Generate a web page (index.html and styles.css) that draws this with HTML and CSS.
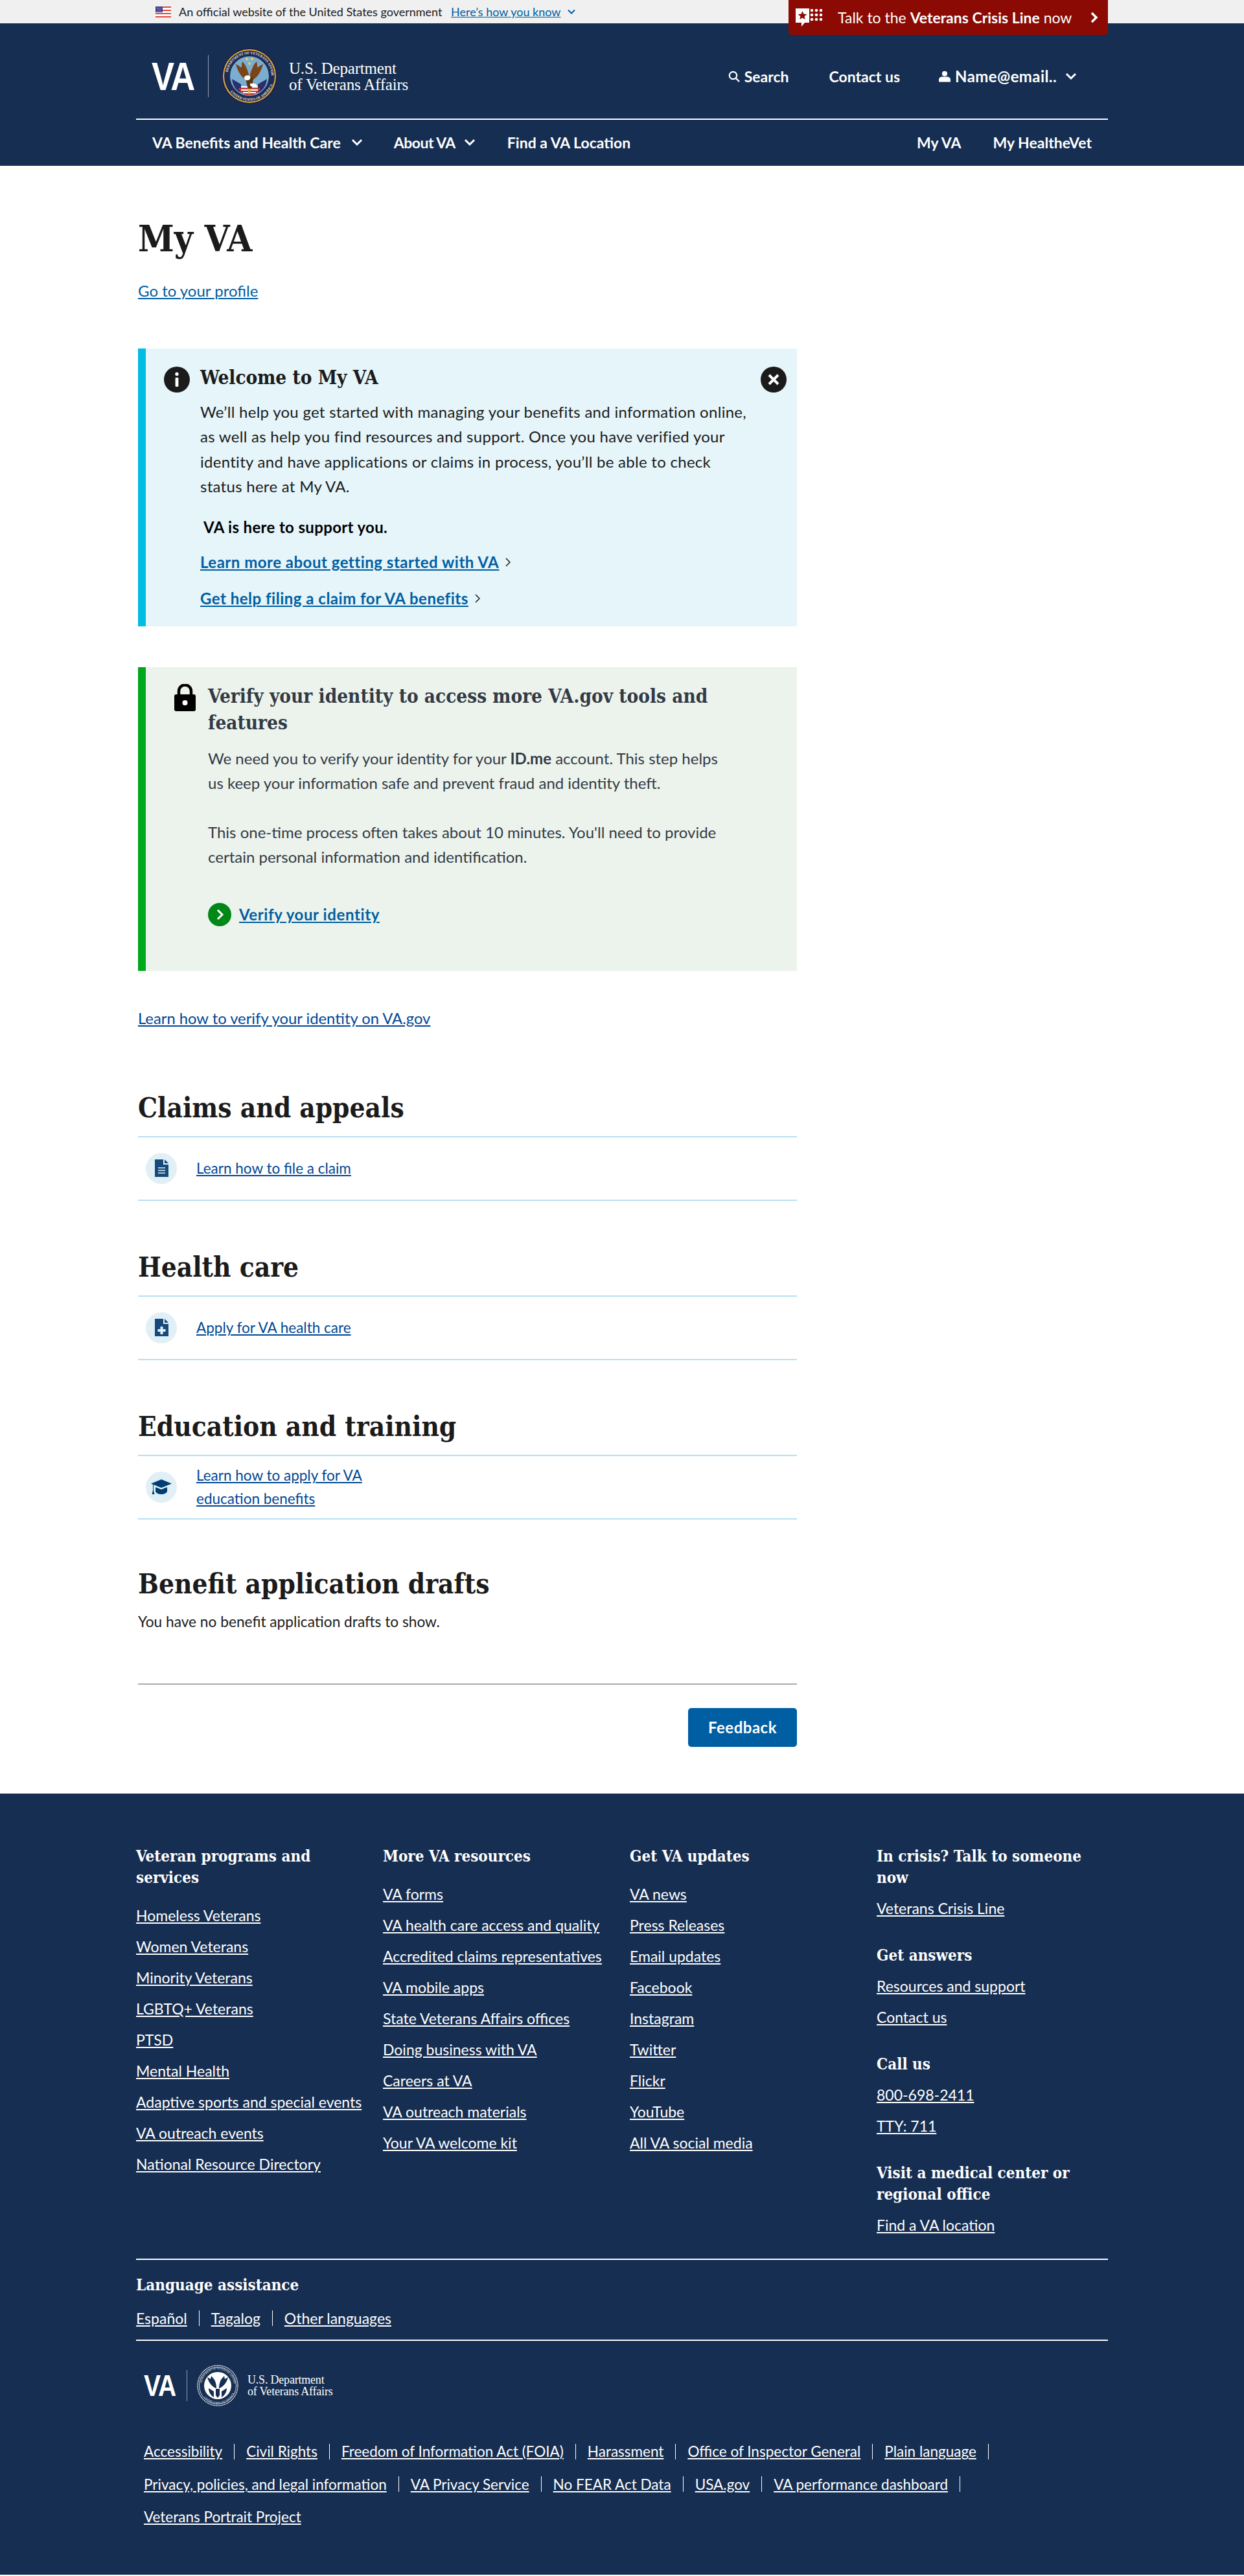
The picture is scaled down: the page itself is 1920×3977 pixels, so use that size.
FILE: index.html
```html
<!DOCTYPE html>
<html lang="en">
<head>
    <meta charset="UTF-8">
    <meta name="viewport" content="width=device-width, initial-scale=1.0">
    <title>My VA | Veterans Affairs</title>
    <link rel="stylesheet" href="styles.css">
</head>
<body>

<!-- official site banner -->
<div class="gov-banner">
    <div class="gov-inner">
        <svg class="flag" viewBox="0 0 24 17">
            <rect width="24" height="17" fill="#fff"/>
            <rect y="0" width="24" height="2" fill="#e0483c"/>
            <rect y="5" width="24" height="2" fill="#e0483c"/>
            <rect y="10" width="24" height="2" fill="#e0483c"/>
            <rect y="15" width="24" height="2" fill="#e0483c"/>
            <rect width="11" height="9" fill="#3c3b8e"/>
            <path d="M2 2h1v1H2zM5 2h1v1H5zM8 2h1v1H8zM3.500 4.500h1v1h-1zM6.500 4.500h1v1h-1zM2 7h1v1H2zM5 7h1v1H5zM8 7h1v1H8z" fill="#fff"/>
        </svg>
        <span class="gov-text">An official website of the United States government</span>
        <a class="gov-link" href="#">Here’s how you know</a>
        <svg class="gov-chev" viewBox="0 0 12 8"><path d="M1 1.500l5 5 5-5" fill="none" stroke="#005ea2" stroke-width="2"/></svg>
    </div>
</div>

<!-- crisis line tab sits over banner and header -->
<a class="crisis-tab" href="#">
    <svg class="crisis-icon" viewBox="0 0 42 28">
        <path d="M0 0h21v22H14l-5 6v-6H0z" fill="#fff"/>
        <path d="M10.500 4l1.900 4.600 5 .4-3.800 3.200 1.200 4.800-4.300-2.600-4.300 2.600 1.200-4.800L3.600 9l5-.4z" fill="#8b0a03"/>
        <g fill="#fff">
            <circle cx="25" cy="3" r="2.300"/><circle cx="32" cy="3" r="2.300"/><circle cx="39" cy="3" r="2.300"/>
            <circle cx="25" cy="10" r="2.300"/><circle cx="32" cy="10" r="2.300"/><circle cx="39" cy="10" r="2.300"/>
            <circle cx="25" cy="17" r="2.300"/><circle cx="32" cy="17" r="2.300"/><circle cx="39" cy="17" r="2.300"/>
        </g>
    </svg>
    <span class="crisis-text">Talk to the <strong>Veterans Crisis Line</strong> now</span>
    <svg class="crisis-chev" viewBox="0 0 12 18"><path d="M2 2l7 7-7 7" fill="none" stroke="#fff" stroke-width="3.500"/></svg>
</a>

<header class="site-header">
    <div class="header-top">
        <a class="logo" href="#">
            <span class="logo-va">VA</span>
            <span class="logo-rule"></span>
            <svg class="seal" viewBox="0 0 86 87">
                <defs>
                    <path id="sealTop" d="M9 43.500a34 34 0 0 1 68 0"/>
                    <path id="sealBottom" d="M5 43.500a38 38 0 0 0 76 0"/>
                </defs>
                <ellipse cx="43" cy="43.500" rx="43" ry="43.500" fill="#20204a"/>
                <ellipse cx="43" cy="43.500" rx="41" ry="41.500" fill="#d9a93c"/>
                <ellipse cx="43" cy="43.500" rx="39" ry="39.500" fill="#1d2b58"/>
                <text class="seal-text"><textPath href="#sealTop" startOffset="6">DEPARTMENT OF VETERANS AFFAIRS</textPath></text>
                <text class="seal-text"><textPath href="#sealBottom" startOffset="26">UNITED STATES OF AMERICA</textPath></text>
                <ellipse cx="43" cy="43.500" rx="30" ry="30.500" fill="#79aed0"/>
                <path d="M16 48l14 8 0 13C22 66 17 58 16 48z" fill="#2b2f6b"/>
                <path d="M70 48l-14 8 0 13c8-3 13-11 14-21z" fill="#2b2f6b"/>
                <path d="M26 62l34 0c-3 8-10 11-17 11s-14-3-17-11z" fill="#c8352e"/>
                <path d="M30 60h26M30 65h26M33 69h20" stroke="#fff" stroke-width="1.800"/>
                <path d="M40 50C33 48 25 38 22 25c5 2 7 5 9 5 0-3 0-6 1-9 3 3 5 6 6 9 3 6 5 13 5 20z" fill="#7b4419"/>
                <path d="M46 50c7-2 15-12 18-25-5 2-7 5-9 5 0-3 0-6-1-9-3 3-5 6-6 9-3 6-5 13-5 20z" fill="#7b4419"/>
                <path d="M37 47c2-4 9-4 12 0l-2 14-3 3-4-3z" fill="#5c3414"/>
                <path d="M35 46c0-3 5-5 8-3 2 1 2 4 0 6-3 2-8 1-8-3z" fill="#fff"/>
                <path d="M44 55c5-1 10 0 11 3-3 3-8 3-11 0z" fill="#fff"/>
                <path d="M40 63l3 10 3-10z" fill="#e0b23c"/>
                <g fill="#f1cb50"><circle cx="39" cy="17" r="2"/><circle cx="47" cy="17" r="2"/><circle cx="43" cy="24" r="2"/></g>
            </svg>
            <span class="logo-words">U.S. Department<br>of Veterans Affairs</span>
        </a>
        <nav class="util-nav">
            <a class="util-search" href="#">
                <svg class="util-icon" viewBox="0 0 18 18"><circle cx="7.500" cy="7.500" r="5.700" fill="none" stroke="#fff" stroke-width="2.200"/><path d="M11.500 11.500l5.500 5.500" stroke="#fff" stroke-width="2.400"/></svg>
                Search
            </a>
            <a class="util-contact" href="#">Contact us</a>
            <a class="util-user" href="#">
                <svg class="util-icon" viewBox="0 0 19 18"><circle cx="9.500" cy="4.500" r="4.300" fill="#fff"/><path d="M0 18v-3.500C0 11 3 9.500 5.500 9.500h8c2.500 0 5.500 1.500 5.500 5V18z" fill="#fff"/></svg>
                Name@email..
                <svg class="nav-chev user-chev" viewBox="0 0 18 12"><path d="M2 2l7 7 7-7" fill="none" stroke="#fff" stroke-width="3"/></svg>
            </a>
        </nav>
    </div>
    <nav class="main-nav">
        <a class="nav-benefits" href="#">VA Benefits and Health Care<svg class="nav-chev" viewBox="0 0 18 12"><path d="M2 2l7 7 7-7" fill="none" stroke="#fff" stroke-width="3"/></svg></a>
        <a class="nav-about" href="#">About VA<svg class="nav-chev" viewBox="0 0 18 12"><path d="M2 2l7 7 7-7" fill="none" stroke="#fff" stroke-width="3"/></svg></a>
        <a class="nav-find" href="#">Find a VA Location</a>
        <a class="nav-myva" href="#">My VA</a>
        <a class="nav-mhv" href="#">My HealtheVet</a>
    </nav>
</header>

<main class="page">
    <h1>My VA</h1>
    <a class="text-link profile-link" href="#">Go to your profile</a>

    <section class="alert alert-info">
        <svg class="alert-icon" viewBox="0 0 40 40"><circle cx="20" cy="20" r="20" fill="#1b1b1b"/><circle cx="20" cy="11.500" r="2.700" fill="#fff"/><rect x="17.600" y="17" width="4.800" height="14" rx="1" fill="#fff"/></svg>
        <div class="alert-body">
            <h3>Welcome to My VA</h3>
            <p class="welcome-copy">We’ll help you get started with managing your benefits and information online, as well as help you find resources and support. Once you have verified your identity and have applications or claims in process, you’ll be able to check status here at My VA.</p>
            <p class="support-line">VA is here to support you.</p>
            <a class="bold-link" href="#"><span>Learn more about getting started with VA</span><svg class="link-chev" viewBox="0 0 8 14"><path d="M1 1l6 6-6 6" fill="none" stroke="#1b1b1b" stroke-width="1.500"/></svg></a>
            <a class="bold-link" href="#"><span>Get help filing a claim for VA benefits</span><svg class="link-chev" viewBox="0 0 8 14"><path d="M1 1l6 6-6 6" fill="none" stroke="#1b1b1b" stroke-width="1.500"/></svg></a>
        </div>
        <svg class="alert-close" viewBox="0 0 40 40"><circle cx="20" cy="20" r="20" fill="#1b1b1b"/><path d="M13 13l14 14M27 13L13 27" stroke="#fff" stroke-width="4"/></svg>
    </section>

    <section class="alert alert-verify">
        <svg class="lock-icon" viewBox="0 0 33 42"><path d="M7 18v-7a9.500 9.500 0 0 1 19 0v7" fill="none" stroke="#000" stroke-width="4.500"/><path d="M3 16h27a3 3 0 0 1 3 3v20a3 3 0 0 1-3 3H3a3 3 0 0 1-3-3V19a3 3 0 0 1 3-3z" fill="#000"/><circle cx="16.500" cy="29" r="4" fill="#fff"/></svg>
        <div class="alert-body">
            <h3>Verify your identity to access more VA.gov tools and features</h3>
            <p class="verify-copy">We need you to verify your identity for your <strong>ID.me</strong> account. This step helps us keep your information safe and prevent fraud and identity theft.</p>
            <p class="verify-copy">This one-time process often takes about 10 minutes. You'll need to provide certain personal information and identification.</p>
            <a class="action-link" href="#">
                <svg class="action-icon" viewBox="0 0 36 36"><circle cx="18" cy="18" r="18" fill="#008817"/><path d="M15 11l7 7-7 7" fill="none" stroke="#fff" stroke-width="3"/></svg>
                <span>Verify your identity</span>
            </a>
        </div>
    </section>

    <a class="text-link verify-help" href="#">Learn how to verify your identity on VA.gov</a>

    <section class="benefit-block first-block">
        <h2>Claims and appeals</h2>
        <div class="benefit-row">
            <span class="benefit-icon">
                <svg viewBox="0 0 21 27"><path d="M0 0h13v8h8v19H0z" fill="#164a7c"/><path d="M15 0l6 6h-6z" fill="#164a7c"/><path d="M5 13h11M5 17h11M5 21h11" stroke="#e1f0f7" stroke-width="1.500"/></svg>
            </span>
            <a class="row-link" href="#">Learn how to file a claim</a>
        </div>
    </section>

    <section class="benefit-block">
        <h2>Health care</h2>
        <div class="benefit-row">
            <span class="benefit-icon">
                <svg viewBox="0 0 21 27"><path d="M0 0h13v8h8v19H0z" fill="#164a7c"/><path d="M15 0l6 6h-6z" fill="#164a7c"/><path d="M8.500 12h4v4h4v4h-4v4h-4v-4h-4v-4h4z" fill="#e1f0f7"/></svg>
            </span>
            <a class="row-link" href="#">Apply for VA health care</a>
        </div>
    </section>

    <section class="benefit-block">
        <h2>Education and training</h2>
        <div class="benefit-row">
            <span class="benefit-icon">
                <svg class="cap-icon" viewBox="0 0 32 24"><path d="M16 0l16 6.500-16 6.500L0 6.500z" fill="#003f72"/><path d="M7 12l9 3.500 9-3.500v7c-2 3-6 4-9 4s-7-1-9-4z" fill="#003f72"/><path d="M3 8v9l-1.500 6h4L4 17V8z" fill="#003f72"/></svg>
            </span>
            <a class="row-link edu-link" href="#">Learn how to apply for VA education benefits</a>
        </div>
    </section>

    <section class="drafts">
        <h2>Benefit application drafts</h2>
        <p>You have no benefit application drafts to show.</p>
    </section>

    <div class="feedback-bar">
        <button class="feedback-btn" type="button">Feedback</button>
    </div>
</main>

<footer class="site-footer">
    <div class="footer-inner">
        <div class="footer-cols">
            <div class="footer-col">
                <h4>Veteran programs and services</h4>
                <ul>
                    <li><a href="#">Homeless Veterans</a></li>
                    <li><a href="#">Women Veterans</a></li>
                    <li><a href="#">Minority Veterans</a></li>
                    <li><a href="#">LGBTQ+ Veterans</a></li>
                    <li><a href="#">PTSD</a></li>
                    <li><a href="#">Mental Health</a></li>
                    <li><a href="#">Adaptive sports and special events</a></li>
                    <li><a href="#">VA outreach events</a></li>
                    <li><a href="#">National Resource Directory</a></li>
                </ul>
            </div>
            <div class="footer-col">
                <h4>More VA resources</h4>
                <ul>
                    <li><a href="#">VA forms</a></li>
                    <li><a href="#">VA health care access and quality</a></li>
                    <li><a href="#">Accredited claims representatives</a></li>
                    <li><a href="#">VA mobile apps</a></li>
                    <li><a href="#">State Veterans Affairs offices</a></li>
                    <li><a href="#">Doing business with VA</a></li>
                    <li><a href="#">Careers at VA</a></li>
                    <li><a href="#">VA outreach materials</a></li>
                    <li><a href="#">Your VA welcome kit</a></li>
                </ul>
            </div>
            <div class="footer-col">
                <h4>Get VA updates</h4>
                <ul>
                    <li><a href="#">VA news</a></li>
                    <li><a href="#">Press Releases</a></li>
                    <li><a href="#">Email updates</a></li>
                    <li><a href="#">Facebook</a></li>
                    <li><a href="#">Instagram</a></li>
                    <li><a href="#">Twitter</a></li>
                    <li><a href="#">Flickr</a></li>
                    <li><a href="#">YouTube</a></li>
                    <li><a href="#">All VA social media</a></li>
                </ul>
            </div>
            <div class="footer-col contact-col">
                <h4>In crisis? Talk to someone now</h4>
                <ul><li><a href="#">Veterans Crisis Line</a></li></ul>
                <h4>Get answers</h4>
                <ul>
                    <li><a href="#">Resources and support</a></li>
                    <li><a href="#">Contact us</a></li>
                </ul>
                <h4>Call us</h4>
                <ul>
                    <li><a href="#">800-698-2411</a></li>
                    <li><a href="#">TTY: 711</a></li>
                </ul>
                <h4>Visit a medical center or regional office</h4>
                <ul><li><a href="#">Find a VA location</a></li></ul>
            </div>
        </div>

        <div class="language-block">
            <h4>Language assistance</h4>
            <ul class="pipe-list language-list">
                <li><a href="#">Español</a></li>
                <li><a href="#">Tagalog</a></li>
                <li><a href="#">Other languages</a></li>
            </ul>
        </div>

        <a class="footer-logo" href="#">
            <span class="logo-va">VA</span>
            <span class="logo-rule"></span>
            <svg class="footer-seal" viewBox="0 0 64 64">
                <defs>
                    <path id="footTop" d="M7 32a25 25 0 0 1 50 0"/>
                    <path id="footBottom" d="M4 32a28 28 0 0 0 56 0"/>
                </defs>
                <circle cx="32" cy="32" r="31" fill="none" stroke="#fff" stroke-width="1.500" stroke-dasharray="1.500 1"/>
                <circle cx="32" cy="32" r="28.500" fill="none" stroke="#fff" stroke-width=".8"/>
                <text class="foot-seal-text"><textPath href="#footTop" startOffset="4">DEPARTMENT OF VETERANS AFFAIRS</textPath></text>
                <text class="foot-seal-text"><textPath href="#footBottom" startOffset="20">UNITED STATES OF AMERICA</textPath></text>
                <circle cx="32" cy="32" r="21" fill="#fff"/>
                <path d="M29 36C24 34 18 28 16 19l5 3 1-5 5 6c2 4 3 8 3 13zM35 36c5-2 11-8 13-17l-5 3-1-5-5 6c-2 4-3 8-3 13z" fill="#162e51"/>
                <path d="M18 36l8 5v9c-5-3-8-8-8-14zM46 36l-8 5v9c5-3 8-8 8-14z" fill="#162e51"/>
                <path d="M29 37h6v10l-3 4-3-4z" fill="#162e51"/>
            </svg>
            <span class="logo-words">U.S. Department<br>of Veterans Affairs</span>
        </a>

        <ul class="pipe-list legal-list">
            <li><a href="#">Accessibility</a></li>
            <li><a href="#">Civil Rights</a></li>
            <li><a href="#">Freedom of Information Act (FOIA)</a></li>
            <li><a href="#">Harassment</a></li>
            <li><a href="#">Office of Inspector General</a></li>
            <li><a href="#">Plain language</a></li>
            <li><a href="#">Privacy, policies, and legal information</a></li>
            <li><a href="#">VA Privacy Service</a></li>
            <li><a href="#">No FEAR Act Data</a></li>
            <li><a href="#">USA.gov</a></li>
            <li><a href="#">VA performance dashboard</a></li>
            <li class="no-pipe"><a href="#">Veterans Portrait Project</a></li>
        </ul>
    </div>
</footer>

</body>
</html>
```

FILE: styles.css
```css
/* My VA page */

body {
    margin: 0;
    padding: 0;
    background-color: #fff;
    color: #1b1b1b;
    font-family: Lato, "Noto Sans", sans-serif;
    font-size: 24px;
    position: relative;
}
a { color: inherit; }
h1, h2, h3, h4, p, ul { margin: 0; padding: 0; }
ul { list-style: none; }
svg { display: block; flex: none; }

/* top banner */
.gov-banner {
    background-color: #f0f0f0;
    height: 36px;
}
.gov-inner {
    width: 1500px;
    margin: 0 auto;
    box-sizing: border-box;
    padding-left: 30px;
    height: 36px;
    display: flex;
    align-items: center;
    font-size: 18px;
}
.flag { width: 24px; height: 17px; margin-right: 12px; }
.gov-text { width: 420px; }
.gov-link { color: #005ea2; width: 180px; }
.gov-chev { width: 12px; height: 8px; }

.crisis-tab {
    position: absolute;
    top: 0;
    left: 1217px;
    width: 493px;
    height: 54px;
    box-sizing: border-box;
    padding: 0 15px 0 11px;
    background-color: #8b0a03;
    border-radius: 0 0 5px 5px;
    color: #fff;
    text-decoration: none;
    display: flex;
    align-items: center;
    font-size: 23px;
}
.crisis-icon { width: 42px; height: 28px; margin-right: 23px; }
.crisis-text { flex: 1; white-space: nowrap; }
.crisis-chev { width: 12px; height: 18px; }

/* header */
.site-header {
    background-color: #162e51;
    color: #fff;
    height: 220px;
}
.header-top {
    width: 1500px;
    height: 149px;
    margin: 0 auto;
    display: flex;
    align-items: center;
    justify-content: space-between;
    box-sizing: border-box;
    padding: 16px 48px 0 24px;
    border-bottom: 2px solid #fff;
}
.logo, .footer-logo {
    display: flex;
    align-items: center;
    color: #fff;
    text-decoration: none;
}
.logo-va {
    font-family: "Liberation Sans", Arial, sans-serif;
    font-weight: 700;
    font-size: 62px;
    letter-spacing: -2.400px;
    line-height: 1;
    width: 70px;
    transform: scaleX(.85);
    transform-origin: left center;
}
.logo-rule {
    width: 1px;
    height: 65px;
    background-color: #8f9cb0;
    margin: 0 20px 0 17px;
}
.seal { width: 86px; height: 87px; margin-right: 18px; }
.seal-text {
    font-family: "Liberation Serif", serif;
    font-size: 5.500px;
    font-weight: 700;
    fill: #f0e6c0;
}
.logo-words {
    font-family: "Liberation Serif", serif;
    font-size: 25px;
    line-height: 25px;
    letter-spacing: -.2px;
}
.util-nav {
    display: flex;
    align-items: center;
    font-weight: 700;
    font-size: 23px;
}
.util-nav a {
    display: flex;
    align-items: center;
    text-decoration: none;
    color: #fff;
}
.util-icon { width: 18px; height: 18px; margin-right: 7px; }
.util-contact { margin: 0 60px 0 62px; }
.util-nav .util-user { font-size: 24px; letter-spacing: .4px; }
.nav-chev { width: 18px; height: 12px; margin-left: 13px; }

.main-nav {
    width: 1500px;
    height: 69px;
    margin: 0 auto;
    box-sizing: border-box;
    padding: 0 25px;
    display: flex;
    align-items: center;
    font-weight: 700;
    font-size: 23px;
}
.main-nav a {
    display: flex;
    align-items: center;
    color: #fff;
    text-decoration: none;
}
.nav-benefits { margin-right: 48px; }
.nav-benefits .nav-chev { margin-left: 16px; }
.nav-about { margin-right: 49px; letter-spacing: -.5px; }
.nav-find { margin-right: auto; }
.nav-myva { margin-right: 49px; }

/* page */
.page {
    width: 1017px;
    margin-left: 213px;
    padding-top: 76px;
    padding-bottom: 72px;
}
h1, h2, h3, h4 {
    font-family: "DejaVu Serif Condensed", "DejaVu Serif", serif;
    font-weight: 700;
}
h1 {
    font-size: 56px;
    line-height: 72px;
}
.text-link {
    display: block;
    color: #005ea2;
    line-height: 38px;
}
.profile-link { margin-top: 26px; width: fit-content; }

.alert {
    display: flex;
    align-items: flex-start;
    margin-top: 70px;
}
.alert-info {
    background-color: #e5f5fa;
    border-left: 12px solid #00bde3;
    padding: 28px 15px 24px 28px;
}
.alert-info .alert-body { width: 865px; margin-left: 16px; }
.alert-icon, .alert-close { width: 40px; height: 40px; }
.alert h3 { font-size: 29.500px; }
.alert-info h3 {
    line-height: 36px;
    margin-top: -1px;
}
.welcome-copy {
    margin-top: 16px;
    line-height: 38.400px;
    width: 845px;
    letter-spacing: .28px;
}
.support-line {
    margin: 24px 0 16px 5px;
    line-height: 38px;
    font-weight: 700;
    color: #000;
    letter-spacing: .35px;
}
.bold-link {
    display: flex;
    align-items: center;
    width: fit-content;
    font-weight: 700;
    color: #005ea2;
    line-height: 38px;
    margin-bottom: 18px;
    letter-spacing: .5px;
}
.bold-link span { text-decoration: underline; }
.bold-link:last-child { margin-bottom: 0; }
.link-chev { width: 8px; height: 14px; margin-left: 10px; }

.alert-verify {
    margin-top: 63px;
    background-color: #ecf3ec;
    border-left: 12px solid #00a91c;
    padding: 24px 0 69px 44px;
    color: #323a45;
}
.lock-icon { width: 33px; height: 42px; margin-top: 2px; }
.alert-verify .alert-body { margin-left: 19px; width: 810px; }
.alert-verify h3 { line-height: 41.500px; width: 800px; }
.verify-copy {
    line-height: 38px;
    margin-top: 15px;
    margin-bottom: 38px;
    width: 805px;
}
.verify-copy + .verify-copy { margin-top: 0; }
.action-link {
    display: flex;
    align-items: center;
    font-weight: 700;
    color: #005ea2;
    margin-top: 52px;
    letter-spacing: .6px;
}
.action-icon { width: 36px; height: 36px; margin-right: 12px; }

.verify-help { margin-top: 54px; color: #004795; font-size: 23.800px; width: fit-content; }

/* benefit sections */
.benefit-block { margin-top: 76px; }
.first-block { margin-top: 93px; }
.benefit-block h2, .drafts h2 {
    font-size: 42px;
    line-height: 54px;
    margin-bottom: 16px;
}
.benefit-row {
    display: flex;
    align-items: center;
    height: 96px;
    padding-left: 12px;
    border-top: 2px solid #b6e1f4;
    border-bottom: 2px solid #b6e1f4;
}
.benefit-icon {
    width: 48px;
    height: 48px;
    border-radius: 50%;
    background-color: #e1f0f7;
    display: flex;
    align-items: center;
    justify-content: center;
    margin-right: 30px;
}
.benefit-icon svg { width: 21px; height: 27px; }
.benefit-icon .cap-icon { width: 32px; height: 24px; }
.row-link {
    color: #004795;
    font-size: 22.500px;
}
.edu-link { width: 300px; line-height: 35.500px; }

.drafts { margin-top: 73px; }
.drafts h2 { margin-bottom: 12px; }
.drafts p { line-height: 38px; font-size: 22.700px; }

.feedback-bar {
    margin-top: 76px;
    border-top: 2px solid #a9aeb1;
    padding-top: 36px;
    display: flex;
    justify-content: flex-end;
}
.feedback-btn {
    width: 168px;
    height: 60px;
    border: none;
    border-radius: 5px;
    background-color: #005ea2;
    color: #fff;
    font-family: inherit;
    font-weight: 700;
    font-size: 24px;
    letter-spacing: .5px;
}

/* footer */
.site-footer {
    background-color: #162e51;
    color: #fff;
    height: 1206px;
    font-size: 23px;
}
.footer-inner {
    width: 1500px;
    margin: 0 auto;
    padding-top: 80px;
}
.footer-cols {
    display: grid;
    grid-template-columns: repeat(4, 357px);
    column-gap: 24px;
    border-bottom: 2px solid #fff;
    padding-bottom: 28px;
}
.site-footer h4 {
    font-size: 24px;
    line-height: 33px;
}
.footer-col ul { margin-top: 18px; }
.footer-col li { line-height: 48px; white-space: nowrap; }
.contact-col ul { margin-top: 7px; margin-bottom: 32px; }
.contact-col ul:last-child { margin-bottom: 0; }

.language-block {
    padding-top: 22px;
    padding-bottom: 15px;
    border-bottom: 2px solid #fff;
}
.pipe-list {
    display: flex;
    flex-wrap: wrap;
}
.pipe-list li {
    display: flex;
    align-items: center;
}
.pipe-list li::after {
    content: "";
    width: 1px;
    height: 24px;
    background-color: #fff;
    margin: 0 18px;
}
.pipe-list li.no-pipe::after, .pipe-list li:last-child::after { display: none; }
.language-list { margin-top: 17px; height: 36px; }

.footer-logo { margin: 37px 0 0 12px; height: 64px; }
.footer-logo .logo-va { font-size: 46px; width: 53px; letter-spacing: -1.500px; }
.footer-logo .logo-rule { height: 48px; margin: 0 15px 0 13px; }
.footer-seal { width: 64px; height: 64px; margin-right: 14px; }
.foot-seal-text {
    font-family: "Liberation Serif", serif;
    font-size: 4px;
    fill: #fff;
}
.footer-logo .logo-words { font-size: 18px; line-height: 18px; }

.legal-list {
    margin: 45px 0 0 12px;
    width: 1488px;
    font-size: 22.500px;
}
.legal-list li { height: 50.500px; }
```
